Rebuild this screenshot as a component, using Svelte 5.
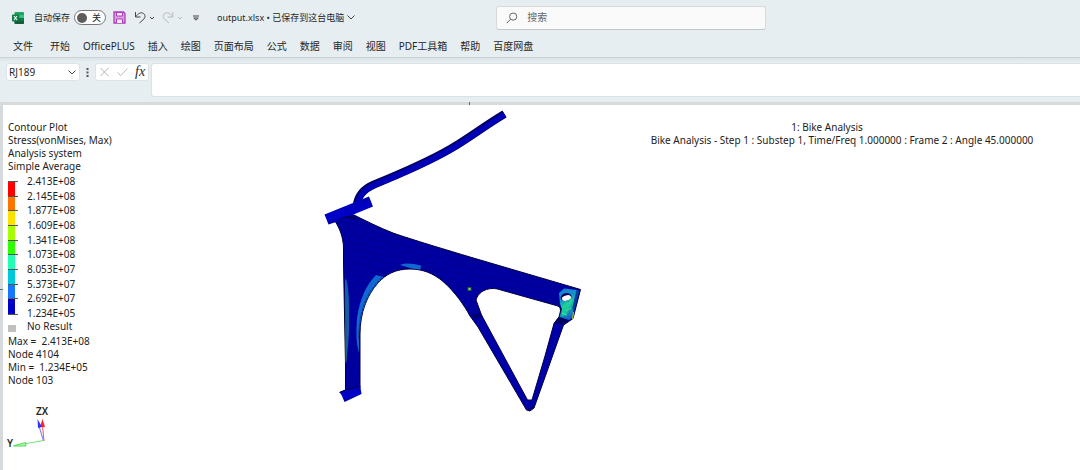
<script lang="ts">
  interface Band {
    color: string;
    name: string;
  }

  const tabs = [
    "文件", "开始", "OfficePLUS", "插入", "绘图", "页面布局", "公式",
    "数据", "审阅", "视图", "PDF工具箱", "帮助", "百度网盘",
  ];

  const heading = ["Contour Plot", "Stress(vonMises, Max)", "Analysis system", "Simple Average"];

  const values = [
    "2.413E+08", "2.145E+08", "1.877E+08", "1.609E+08", "1.341E+08",
    "1.073E+08", "8.053E+07", "5.373E+07", "2.692E+07", "1.234E+05",
  ];

  const bands: Band[] = [
    { name: "red", color: "#ff0000" },
    { name: "orange", color: "#ff7300" },
    { name: "yellow", color: "#ffe100" },
    { name: "lime", color: "#a5ff00" },
    { name: "green", color: "#30ff00" },
    { name: "mint", color: "#23ffb4" },
    { name: "cyan", color: "#00c8dc" },
    { name: "azure", color: "#1478ff" },
    { name: "blue", color: "#0000c8" },
  ];

  const extremes = ["Max =  2.413E+08", "Node 4104", "Min =  1.234E+05", "Node 103"];

  let autosave = $state(false);
  let cell = $state("RJ189");
  let formula = $state("");
  let query = $state("");
</script>

<header class="ribbon">
  <div class="titlebar">
    <svg class="excel" viewBox="0 0 12 12" aria-hidden="true">
      <rect x="2.5" y="0" width="9.5" height="12" rx="1" fill="#21a366" />
      <path d="M2.500 6H12V11a1 1 0 0 1-1 1H3.500a1 1 0 0 1-1-1z" fill="#185c37" />
      <path d="M7.500 3H12V6H7.500z" fill="#33c481" />
      <path d="M7.500 6H12V9H7.500z" fill="#107c41" />
      <rect x="0" y="2.500" width="7" height="7" rx=".8" fill="#107c41" />
      <path d="M2 4l3 4M5 4L2 8" stroke="#fff" stroke-width="1.100" />
    </svg>
    <label class="autosave">
      <span>自动保存</span>
      <span class="switch">
        <input type="checkbox" role="switch" bind:checked={autosave} />
        <span class="state">{autosave ? "开" : "关"}</span>
      </span>
    </label>
    <button class="save" aria-label="保存">
      <svg viewBox="0 0 13 13">
        <path d="M1 1h9.500L12 2.500V12H1z" fill="#d9a3e0" stroke="#ae3cba" stroke-width="1.300" />
        <path d="M3.500 1.500h6v3.500h-6z" fill="#f8edf9" stroke="#ae3cba" />
        <path d="M3.500 12V8h6v4" fill="#f8edf9" stroke="#ae3cba" />
      </svg>
    </button>
    <button class="undo" aria-label="撤销">
      <svg viewBox="0 0 20 13">
        <path d="M1.500 1v5h5M1.700 5.800C4 2.500 6.500 1.200 8.800 2.100c2.500 1 2.900 3.900 1.100 5.900L5.500 12" />
        <path d="M16 6l2 2 2-2" />
      </svg>
    </button>
    <button class="undo redo" aria-label="恢复">
      <svg viewBox="0 0 20 13">
        <path d="M10.800 1v5h-5M10.600 5.800C8.300 2.500 5.800 1.200 3.500 2.100 1 3.100.6 6 2.400 8l4.400 4" />
        <path d="M16 6l2 2 2-2" />
      </svg>
    </button>
    <button class="more" aria-label="自定义快速访问工具栏">
      <svg viewBox="0 0 6 6"><path d="M0 1h6M.8 3L3 5.200 5.200 3z" /></svg>
    </button>
    <button class="filename">
      output.xlsx • 已保存到这台电脑
      <svg viewBox="0 0 8 5"><path d="M.5.5L4 4 7.500.5" /></svg>
    </button>
    <label class="search">
      <svg viewBox="0 0 12 12"><circle cx="7.200" cy="4.600" r="3.600" /><path d="M4.600 7.200L.8 11.200" /></svg>
      <input type="search" placeholder="搜索" aria-label="搜索" bind:value={query} />
    </label>
  </div>
  <nav class="tabs">
    {#each tabs as tab}
      <button>{tab}</button>
    {/each}
  </nav>
</header>

<div class="formula-bar">
  <div class="name-box">
    <input aria-label="名称框" bind:value={cell} />
    <button aria-label="名称列表">
      <svg viewBox="0 0 8 5"><path d="M.5.5L4 4 7.500.5" /></svg>
    </button>
  </div>
  <svg class="grip" viewBox="0 0 3 9" aria-hidden="true">
    <path d="M.5 0h2v2h-2zM.5 3.500h2v2h-2zM.5 7h2v2h-2z" />
  </svg>
  <div class="actions">
    <button class="faint" aria-label="取消">
      <svg viewBox="0 0 10 10"><path d="M1 1l8 8M9 1L1 9" /></svg>
    </button>
    <button class="faint" aria-label="输入">
      <svg viewBox="0 0 12 10"><path d="M.5 5.500L4 9l7.500-8" /></svg>
    </button>
    <button class="fx" aria-label="插入函数">fx</button>
  </div>
  <input class="formula" aria-label="编辑栏" bind:value={formula} />
</div>

<main class="plot">
  <i class="handle top"></i>
  <i class="handle left"></i>

  <section class="legend">
    {#each heading as line}
      <div class="line">{line}</div>
    {/each}
    <div class="scale">
      <div class="bar">
        {#each bands as band (band.name)}
          <div class="band" style:background-color={band.color}></div>
        {/each}
      </div>
      <div class="values">
        {#each values as value}
          <span>{value}</span>
        {/each}
      </div>
    </div>
    <div class="none"><i></i>No Result</div>
    {#each extremes as line}
      <div class="line">{line}</div>
    {/each}

    <svg class="axes" viewBox="0 0 50 50">
      <g class="axis-name">
        <text x="28" y="12">ZX</text>
        <text x="-1" y="44">Y</text>
      </g>
      <path d="M36 38L34.500 23" stroke="#ff5050" />
      <path d="M35.500 38L31 23" stroke="#7070ff" />
      <path d="M35.500 37.500L7 42.500" stroke="#70e870" />
      <path d="M34.500 16l2.500 8h-5z" fill="#ff2020" />
      <path d="M29.500 16l4.500 8-4 1z" fill="#3030ff" />
      <path d="M5.500 43l12-3.500.5 3.500z" fill="#b0f5b0" stroke="#50e050" />
    </svg>
  </section>

  <svg class="model" viewBox="320 105 270 310" role="img" aria-label="Bike frame stress contour">
    <defs>
      <pattern id="mesh" width="4" height="4" patternUnits="userSpaceOnUse" patternTransform="rotate(18)">
        <path d="M0 0H4M0 0V4" stroke="#000050" stroke-width=".9" />
      </pattern>
      <linearGradient id="tube" x1="0" y1="0" x2=".35" y2="1">
        <stop offset="0" stop-color="#000050" />
        <stop offset=".35" stop-color="#0000b4" />
        <stop offset=".75" stop-color="#0000cd" />
        <stop offset="1" stop-color="#000082" />
      </linearGradient>
      <linearGradient id="hot" x1="0" y1="0" x2=".3" y2="1">
        <stop offset="0" stop-color="#1478d2" />
        <stop offset=".4" stop-color="#1496c8" />
        <stop offset=".6" stop-color="#1ec896" />
        <stop offset="1" stop-color="#1464d2" />
      </linearGradient>
    </defs>

    <!-- handlebar -->
    <g fill="none">
      <path d="M504.500 114C485 125.500 467 139.500 451 148.500C427 162.500 396 175.500 374 184.500C363 189.500 358 195.500 356.500 206" stroke="#00005f" stroke-width="8" />
      <path d="M504.800 114.500C485.500 126 467.500 140 451.500 149C427.500 163 396.500 176 374.500 185C363.500 190 358.500 196 357 206" stroke="#0000b9" stroke-width="5.500" />
    </g>

    <!-- frame plate with the strut opening -->
    <path
      fill-rule="evenodd"
      d="M335 221L352 214C366 221 378 227 393 233C410 239 450 251 470 257L580.500 289.500L573 318.500L568 322L563.500 325L534 408L530 411L526.500 410L478 327L470 316C464 305 455 292 443 281.500C433 273 422 269 410 269C396 269 386 274 378 283C367 295 360 313 360 334V388L345.500 391V365L343.500 263V247C343 237 340 229 335 221Z
         M476 300C478 293 484 289 492 288.500C496 288.500 498 289 501 290L558 306Q561 307 560.500 311L559 317L554 323.500L545 356L532 400H527.500L481.500 315Z"
      fill="#0000a8"
      stroke="#00003c"
    />
    <path
      d="M335 221L352 214C366 221 378 227 393 233C410 239 450 251 470 257L580.500 289.500L576 306L561 305L501 289L492 288C484 288 478 292 476 300L481 315L472 317C464 305 455 292 443 281.500C433 273 422 269 410 269C396 269 386 274 378 283C367 295 360 313 360 334V388L345.500 391V365L343.500 263V247C343 237 340 229 335 221Z"
      fill="url(#mesh)"
      opacity=".55"
    />
    <path d="M336 221C345 213 350 217 356 219" stroke="#000055" stroke-width="2" fill="none" />

    <!-- head tube and lower tube -->
    <path d="M324.500 214.500L369 196.500L373 206.500L351 215.500Q343 215 336 222L328.500 224.500Z" fill="url(#tube)" />
    <path d="M339.500 392L345.500 389.500L360 384.500L361.500 394L344.500 402L342 396Z" fill="url(#tube)" />
    <path d="M339.500 392.500L345.500 390L360 386" stroke="#000046" fill="none" />

    <!-- raised stress zones -->
    <g fill="#1268d2">
      <path d="M345.500 277Q349 286 349 308V332Q348 350 345.700 364Z" fill="#0f5fae" />
      <path d="M383.500 277L376 275Q361 290 357 318Q355 340 359 353V334C360 313 367 295 378 283Z" />
      <path d="M400 265Q407 262 421 265.500L420.500 269.500L412 268.500Z" />
    </g>
    <path d="M382 278C366 293 359 311 358.500 340" stroke="#0a3c96" stroke-width="1.200" stroke-dasharray="3 1" fill="none" />
    <path d="M345.500 280L346 362" stroke="#28645a" fill="none" />

    <!-- strut joints -->
    <path d="M471 315L480 313L483 317L475 319Z" fill="#00006e" />
    <path d="M554 323L559.500 316L570 319L564 324.500Z" fill="#00005f" />
    <path d="M527.500 408q4 1 6-1" stroke="#000050" fill="none" />

    <!-- rear bracket -->
    <path d="M559 293L564 288.500L577 290L573 317L569 320L559.500 317L562 309L560 304Z" fill="url(#hot)" />
    <path d="M562 306l5-4 4 3-3 4-1 6-5 1z" fill="#20d39b" opacity=".7" />
    <path d="M569 304l3-5M566 311l5-3M562 313l5 2" stroke="#46e08c" fill="none" />
    <path d="M576.500 290L579.500 290.500L573.500 314L572.500 307Z" fill="#003ca0" />
    <path d="M573.500 312l-1 7" stroke="#a8bb22" stroke-width="1.200" />
    <ellipse cx="566" cy="297" rx="5.500" ry="3.800" transform="rotate(-15 566 297)" fill="#000064" />
    <ellipse cx="566.500" cy="298" rx="4.600" ry="2.700" transform="rotate(-15 566.500 298)" fill="#fff" />

    <!-- centre of rotation -->
    <rect x="468" y="287.500" width="3" height="3" fill="#8cdc78" stroke="#1e5a28" />
  </svg>

  <section class="caption">
    <div class="title">1: Bike Analysis</div>
    <div>Bike Analysis - Step 1 : Substep 1, Time/Freq 1.000000 : Frame 2 : Angle 45.000000</div>
  </section>
</main>

<style>
  :global(body) {
    margin: 0;
    background: #ffffff;
    color: #262626;
    font: 10px/13px "Noto Sans", "Noto Sans CJK SC", sans-serif;
  }

  :global(#app) {
    display: flex;
    flex-direction: column;
    min-height: 100vh;
  }

  button,
  input {
    margin: 0;
    padding: 0;
    border: 0;
    outline: 0;
    background: none;
    color: inherit;
    font: inherit;
  }

  svg {
    display: block;
    flex: none;
  }

  button svg,
  .search svg {
    fill: none;
    stroke: #444444;
  }

  .ribbon {
    background: #e7eef2;
    border-bottom: 1px solid #c9d2d6;
  }

  .titlebar {
    display: flex;
    align-items: center;
    height: 35px;
    padding-left: 12px;
  }

  .excel {
    width: 12px;
    height: 12px;
  }

  .autosave {
    display: flex;
    align-items: center;
    gap: 4px;
    margin-left: 10px;
    font-size: 9px;
  }

  .switch {
    display: flex;
    align-items: center;
    gap: 5px;
    box-sizing: border-box;
    width: 32px;
    height: 15px;
    padding-left: 2px;
    border: 1px solid #777777;
    border-radius: 8px;
    background: #ffffff;
  }

  .switch input {
    appearance: none;
    width: 10px;
    height: 10px;
    border-radius: 50%;
    background: #5c5c5c;
  }

  .save {
    margin-left: 7px;
  }

  .save svg {
    width: 13px;
    height: 13px;
  }

  .undo {
    margin-left: 8px;
  }

  .undo svg {
    width: 20px;
    height: 13px;
  }

  .redo svg {
    stroke: #b4babd;
  }

  .more {
    margin-left: 11px;
  }

  .more svg {
    width: 6px;
    height: 6px;
  }

  .filename {
    display: flex;
    align-items: center;
    gap: 3px;
    margin-left: 18px;
    font-size: 9px;
  }

  .filename svg,
  .name-box svg {
    width: 8px;
    height: 5px;
  }

  .search {
    display: flex;
    flex: 0 1 270px;
    align-items: center;
    gap: 9px;
    box-sizing: border-box;
    height: 24px;
    margin-left: 141px;
    padding-left: 9px;
    border: 1px solid #d5dadd;
    border-bottom-color: #c2c7ca;
    border-radius: 3px;
    background: #fafafa;
  }

  .search svg {
    width: 12px;
    height: 12px;
    stroke: #666666;
  }

  .search input {
    flex: 1;
    min-width: 0;
  }

  .search input::placeholder {
    color: #666666;
  }

  .tabs {
    display: flex;
    align-items: center;
    gap: 13px;
    height: 22px;
    padding-left: 13px;
  }

  .tabs button {
    white-space: nowrap;
  }

  .tabs button:first-child {
    margin-right: 4px;
  }

  .formula-bar {
    display: flex;
    align-items: flex-start;
    padding: 5px 0 5px 6px;
    background: linear-gradient(#dce3e7, #e7eef2 4px);
  }

  .name-box,
  .actions {
    display: flex;
    align-items: center;
    box-sizing: border-box;
    height: 18px;
    border: 1px solid #dde4e8;
    border-radius: 3px;
    background: #ffffff;
  }

  .name-box {
    width: 74px;
    padding: 0 3px 0 2px;
  }

  .name-box input {
    flex: 1;
    min-width: 0;
  }

  .grip {
    width: 3px;
    height: 9px;
    margin: 5px 6px 0;
    fill: #555555;
  }

  .actions {
    gap: 7px;
    width: 54px;
    padding-left: 3px;
  }

  .actions svg {
    width: 11px;
    height: 10px;
  }

  .faint svg {
    stroke: #b5b5b5;
  }

  .fx {
    font: italic 14px/16px "Liberation Serif", serif;
  }

  .formula {
    flex: 1;
    min-width: 0;
    height: 32px;
    margin-left: 2px;
    border: 1px solid #dbe2e6;
    border-right: 0;
    border-radius: 3px 0 0 3px;
    background: #ffffff;
  }

  .plot {
    position: relative;
    display: flex;
    flex: 1;
    gap: 14px;
    padding-left: 5px;
    border-top: 3px solid #d9dbdb;
    border-left: 3px solid #d6dadd;
    background: #ffffff;
    color: #1c1c1c;
  }

  .handle {
    position: absolute;
    background: #3d8061;
  }

  .handle.top {
    top: -3px;
    left: 466px;
    width: 1px;
    height: 3px;
  }

  .handle.left {
    top: 184px;
    left: -3px;
    width: 3px;
    height: 1px;
  }

  .legend {
    flex: none;
    width: 298px;
    padding-top: 16px;
  }

  .line {
    white-space: pre;
  }

  .scale {
    display: flex;
    gap: 11px;
    height: 145px;
    margin-top: 2px;
  }

  .bar {
    display: flex;
    flex-direction: column;
    width: 8px;
    margin: 7px 0 6px;
  }

  .band {
    flex: 1;
    box-sizing: border-box;
    width: 10px;
    border-right: 3px solid #ffffff;
    background-clip: padding-box;
    box-shadow: 0 -1px #555555;
  }

  .band:last-child {
    box-shadow: 0 -1px #555555, 0 1px #555555;
  }

  .values {
    display: flex;
    flex-direction: column;
    justify-content: space-between;
  }

  .none {
    display: flex;
    align-items: center;
    gap: 11px;
    margin-bottom: 2px;
  }

  .none i {
    width: 8px;
    height: 7px;
    margin-top: 3px;
    background: #c0c0c0;
  }

  .axes {
    width: 50px;
    height: 50px;
    margin-top: 16px;
    overflow: visible;
    fill: none;
  }

  .axis-name {
    fill: #262626;
    font-size: 10px;
    font-weight: 600;
  }

  .model {
    width: 270px;
    height: 310px;
  }

  .caption {
    flex: 1;
    padding-top: 16px;
    text-align: center;
  }

  .title {
    padding-right: 30px;
  }
</style>
